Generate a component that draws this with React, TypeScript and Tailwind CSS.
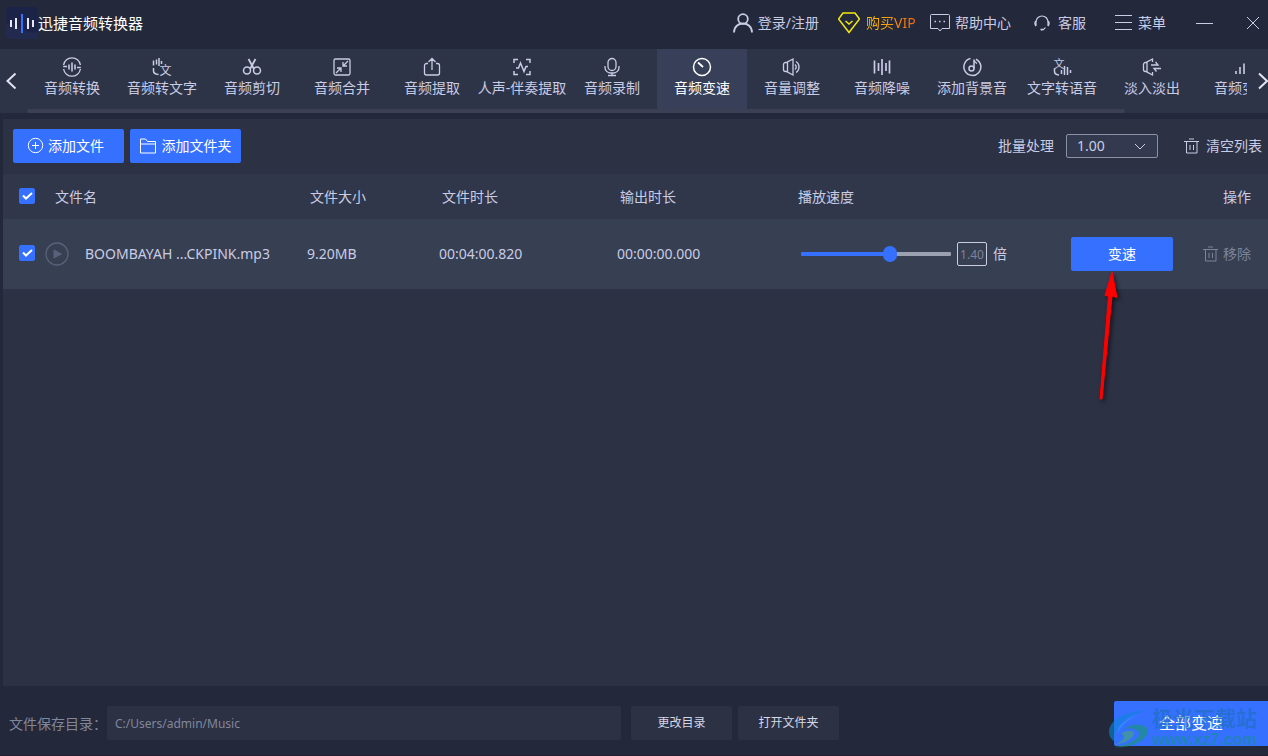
import React, { useState } from 'react';
import clsx from 'clsx';

interface IconProps {
  className?: string;
  size?: number;
  children?: React.ReactNode;
}

const Icon: React.FC<IconProps> = ({ className, size = 20, children }) => (
  <svg
    width={size}
    height={size}
    viewBox={`0 0 ${size} ${size}`}
    fill="none"
    stroke="currentColor"
    strokeWidth="1.3"
    aria-hidden="true"
    className={clsx('shrink-0', className)}
  >
    {children}
  </svg>
);

const tabs = [
  {
    label: '音频转换',
    icon: (
      <>
        <path d="M1.6 8a8.5 8.5 0 0 1 16.8 0M18.4 12a8.5 8.5 0 0 1-16.8 0M1.2 9.5H5M15 10.500H18.800" />
        <path d="M7 7.500v5M10 5.500v9M13 7.500v5" strokeWidth="1.600" />
      </>
    ),
  },
  {
    label: '音频转文字',
    icon: (
      <>
        <path d="M1.5 3.5v5M4.500 2.500v5M7 1v8M9.500 4v3M1.5 11v3q0 3 5 3.5" strokeWidth="1.500" />
        <text x="7.5" y="18" fontSize="12" fill="currentColor" stroke="none">文</text>
      </>
    ),
  },
  {
    label: '音频剪切',
    icon: (
      <>
        <path d="M6.5 2l5.5 10M13.5 2L8 12" strokeWidth="1.8" />
        <circle cx="5" cy="13.500" r="3.500" strokeWidth="1.500" />
        <circle cx="15" cy="13.500" r="3.500" strokeWidth="1.500" />
      </>
    ),
  },
  {
    label: '音频合并',
    icon: (
      <>
        <rect x="2" y="2" width="16" height="16" rx="1.5" />
        <path d="M16 4l-5 5M11 5v4h4M4 16l5-5M5 11h4v4" />
      </>
    ),
  },
  {
    label: '音频提取',
    icon: <path d="M6 6.5H4.5A2 2 0 0 0 2.5 8.5V16a2 2 0 0 0 2 2h11a2 2 0 0 0 2-2V8.5a2 2 0 0 0-2-2H14M10 13V2M6.5 5L10 1.5 13.5 5" />,
  },
  {
    label: '人声-伴奏提取',
    icon: <path d="M2 6V2.5h4M14 2.5h4V6M18 14v3.5h-4M6 17.5H2V14M4 11h2.5l2-5 3.5 8.5 2-5H16" strokeWidth="1.5" />,
  },
  {
    label: '音频录制',
    icon: (
      <>
        <rect x="6" y="1.5" width="8" height="12" rx="4" />
        <path d="M3 9v1.5a5.5 5.5 0 0 0 5.500 5.500h3a5.500 5.500 0 0 0 5.500-5.500V9M10 16v2.500M6 18.500h8" />
      </>
    ),
  },
  {
    label: '音频变速',
    icon: (
      <>
        <circle cx="10" cy="10" r="8.5" strokeWidth="1.5" />
        <path d="M6 5.5l5 4.5" strokeWidth="1.8" />
      </>
    ),
  },
  {
    label: '音量调整',
    icon: (
      <>
        <path d="M5.5 5.5h-2a2 2 0 0 0-2 2v5a2 2 0 0 0 2 2h2M5.5 5v10l5.5 3V2z" />
        <path d="M13 7.5q2.5 2.5 0 5M14 4.5a6.5 6.5 0 0 1 0 11" />
      </>
    ),
  },
  {
    label: '音频降噪',
    icon: <path d="M2.5 3.5v13M6.5 6v8M10 2v16M14 6v8M17.5 3.5v13" strokeWidth="1.7" />,
  },
  {
    label: '添加背景音',
    icon: (
      <>
        <path d="M8.5 1.600a8.500 8.500 0 1 0 5.500 .6" strokeWidth="1.500" />
        <circle cx="9.500" cy="11.500" r="2.500" strokeWidth="1.500" />
        <path d="M12 11.500V2.500q.5 3 3 4" strokeWidth="1.500" />
      </>
    ),
  },
  {
    label: '文字转语音',
    icon: (
      <>
        <text x="1.5" y="10.5" fontSize="11" fill="currentColor" stroke="none">文</text>
        <path d="M2.5 11.500v3q0 3 4.500 3.500M9.500 13v4M12.500 9v9M15.500 10v8M18.500 13v3" strokeWidth="1.500" />
      </>
    ),
  },
  {
    label: '淡入淡出',
    icon: (
      <>
        <path d="M5 5.5H3.5a2 2 0 0 0-2 2v5a2 2 0 0 0 2 2H5M10.5 5V2L5 5v10l5.5 3v-3" />
        <path d="M9 8h7l-2.5-3M19 11.5h-7l2.500 3" />
      </>
    ),
  },
  {
    label: '音频变调',
    icon: <path d="M4 14v3M8 10v7M12 6.5V17M16 3v14" strokeWidth="1.6" />,
  },
];

const TrashIcon: React.FC = () => (
  <Icon size={16}>
    <path d="M0 3.5h15M5 1h5M2.5 4v11h10.5V4M6 7v5M9.5 7v5" strokeWidth="1" />
  </Icon>
);

const TitleBar: React.FC = () => (
  <header className="flex h-[49px] items-center pb-1 pl-[6px] pr-2 text-sm leading-5 text-[#c9cce4]">
    <svg width="32" height="32" viewBox="0 0 32 32" aria-hidden="true" className="shrink-0">
      <rect width="32" height="32" rx="5" fill="#1c2348" />
      <path d="M0 16Q9 17 16 22T32 25V28a4 4 0 0 1-4 4H4a4 4 0 0 1-4-4Z" fill="#222a50" />
      <path d="M5 13v7M10 11v11M22 11v11M27 13v7" stroke="#e6e9f5" strokeWidth="2" />
      <path d="M16 7v19" stroke="#3570ff" strokeWidth="2" />
    </svg>
    <h1 className="text-[15px] leading-5 text-white">迅捷音频转换器</h1>

    <nav className="ml-auto flex items-center whitespace-nowrap">
      <a href="#login" className="mr-[19px] flex items-center gap-[5px]">
        <Icon>
          <circle cx="10" cy="6" r="4.800" strokeWidth="1.800" />
          <path d="M1 19.500c0-12 18-12 18 0" strokeWidth="1.800" />
        </Icon>
        登录/注册
      </a>
      <a href="#vip" className="mr-[13px] flex items-center gap-[6px]">
        <Icon size={22} className="text-[#f5e90c]">
          <path d="M5 1h12l4.500 6L11 20.500.5 7z" strokeWidth="1.500" />
          <path d="M7.500 9l3.500 3 3.500-3" strokeWidth="1.500" />
        </Icon>
        <span className="w-[51px] bg-gradient-to-r from-[#ffc400] to-[#f06410] bg-clip-text text-transparent">购买VIP</span>
      </a>
      <a href="#help" className="mr-[23px] flex items-center gap-[5px]">
        <Icon>
          <path d="M1.500 1.500h17a1 1 0 0 1 1 1v13H12l-2 2.500-2-2.500H.5v-13a1 1 0 0 1 1-1z" strokeWidth="1" />
          <path d="M4.500 8.500h1.500M9 8.500h1.500M13.500 8.500H15" strokeWidth="1.500" />
        </Icon>
        帮助中心
      </a>
      <a href="#service" className="mr-[29px] flex items-center gap-2">
        <Icon size={16}>
          <path d="M2 10.500V7a6 6 0 0 1 12 0v3.500M11.500 12.500Q10 15 7 15" strokeWidth="1.200" />
          <path d="M2 6q-2 2 0 5M14 6q2 2 0 5M6.500 14.500h3" strokeWidth="1.500" />
        </Icon>
        客服
      </a>
      <button type="button" className="mr-[30px] flex items-center gap-[6px]">
        <Icon size={17}>
          <path d="M0 1.500h17M0 8.500h17M0 15.500h17" strokeWidth="1" />
        </Icon>
        菜单
      </button>
      <button type="button" aria-label="最小化" className="mr-[33px]">
        <Icon size={17}>
          <path d="M0 9.500h17" strokeWidth="1" />
        </Icon>
      </button>
      <button type="button" aria-label="关闭">
        <Icon size={14}>
          <path d="M1 1l12 12M13 1L1 13" strokeWidth="1" />
        </Icon>
      </button>
    </nav>
  </header>
);

interface TabBarProps {
  active: string;
  onSelect: (label: string) => void;
}

const TabBar: React.FC<TabBarProps> = ({ active, onSelect }) => (
  <div className="flex h-16 bg-[#2d3448]">
    <button type="button" aria-label="向左" className="flex w-[27px] shrink-0 items-center justify-center pr-[6px] text-[#e0e3f0]">
      <Icon>
        <path d="M14.5 2.5L6.5 10l8 7.5" strokeWidth="2" />
      </Icon>
    </button>
    <div className="min-w-0 flex-1 overflow-hidden">
      <div className="flex h-[60px]">
        {tabs.map((tab) => (
          <button
            key={tab.label}
            type="button"
            onClick={() => onSelect(tab.label)}
            className={clsx(
              'flex w-[90px] shrink-0 flex-col items-center gap-px pt-2 text-sm leading-5 whitespace-nowrap',
              tab.label === active ? 'bg-[#374058] text-white' : 'text-[#c9cce4]'
            )}
          >
            <Icon>{tab.icon}</Icon>
            {tab.label}
          </button>
        ))}
      </div>
      <div className="h-1 w-[90%] rounded-sm bg-[#3b4054]" />
    </div>
    <button type="button" aria-label="向右" className="flex w-[21px] shrink-0 items-center justify-end text-[#e0e3f0]">
      <Icon>
        <path d="M11 2.500L19 10l-8 7.500" strokeWidth="2" />
      </Icon>
    </button>
  </div>
);

interface CheckBoxProps {
  label: string;
  checked: boolean;
  onChange: (checked: boolean) => void;
}

const CheckBox: React.FC<CheckBoxProps> = ({ label, checked, onChange }) => (
  <span className="relative mb-[2px] block size-4">
    <input
      type="checkbox"
      aria-label={label}
      checked={checked}
      onChange={(e) => onChange(e.target.checked)}
      className="block size-4 appearance-none rounded-[2px] border border-[#8b91a5] checked:border-[#3570ff] checked:bg-[#3570ff]"
    />
    {checked && (
      <Icon size={16} className="pointer-events-none absolute inset-0 text-white">
        <path d="M4 7.500l3 3 6-5.500" strokeWidth="2" />
      </Icon>
    )}
  </span>
);

const FileTable: React.FC = () => {
  const [checked, setChecked] = useState(true);
  const [speed, setSpeed] = useState(1.4);
  const filled = ((speed - 0.5) / 1.5) * 100;

  return (
    <table className="w-full table-fixed text-left text-sm leading-5 text-[#c9cce4]">
      <colgroup>
        <col className="w-[42px]" />
        <col />
        <col className="w-[132px]" />
        <col className="w-[178px]" />
        <col className="w-[178px]" />
        <col className="w-[276px]" />
        <col className="w-[207px]" />
      </colgroup>
      <thead className="bg-[#31374a]">
        <tr className="h-[45px]">
          <th className="pl-4">
            <CheckBox label="全选" checked={checked} onChange={setChecked} />
          </th>
          <th className="pl-[10px] font-normal">文件名</th>
          <th className="pl-[13px] font-normal">文件大小</th>
          <th className="pl-[13px] font-normal">文件时长</th>
          <th className="pl-[13px] font-normal">输出时长</th>
          <th className="pl-[13px] font-normal">播放速度</th>
          <th className="pr-[17px] text-right font-normal">操作</th>
        </tr>
      </thead>
      <tbody className="bg-[#373f53]">
        <tr className="h-[70px]">
          <td className="pl-4">
            <CheckBox label="选择文件" checked={checked} onChange={setChecked} />
          </td>
          <td>
            <div className="flex items-center gap-4 whitespace-nowrap">
              <button type="button" aria-label="播放" className="text-[#59617a]">
                <Icon size={24}>
                  <circle cx="12" cy="12" r="11" />
                  <path d="M9 8l7.500 4L9 16z" fill="currentColor" strokeWidth="1" />
                </Icon>
              </button>
              BOOMBAYAH ...CKPINK.mp3
            </div>
          </td>
          <td className="pl-[10px]">9.20MB</td>
          <td className="pl-[10px]">00:04:00.820</td>
          <td className="pl-[10px]">00:00:00.000</td>
          <td className="pl-4">
            <div className="flex items-center gap-[6px]">
              <input
                type="range"
                aria-label="播放速度"
                min={0.5}
                max={2}
                step={0.1}
                value={speed}
                onChange={(e) => setSpeed(Number(e.target.value))}
                style={{ backgroundImage: `linear-gradient(to right, #3570ff ${filled}%, #9ba1b0 ${filled}%)` }}
                className="h-1 w-[150px] appearance-none rounded-[1px] [&::-webkit-slider-thumb]:h-4 [&::-webkit-slider-thumb]:w-[14px] [&::-webkit-slider-thumb]:appearance-none [&::-webkit-slider-thumb]:rounded-full [&::-webkit-slider-thumb]:bg-[#3570ff]"
              />
              <label className="flex items-center gap-[6px]">
                <input
                  type="text"
                  value={speed.toFixed(2)}
                  onChange={(e) => setSpeed(Number(e.target.value) || 1)}
                  className="h-6 w-[30px] rounded-[2px] border border-[#c9cce4] text-center text-xs text-[#7d8498]"
                />
                倍
              </label>
            </div>
          </td>
          <td className="pl-[10px] pr-[17px]">
            <div className="flex items-center justify-between">
              <div className="relative">
                <button type="button" className="h-[34px] w-[102px] rounded-[2px] bg-[#3570ff] text-white">
                  变速
                </button>
                <svg
                  width="30"
                  height="132"
                  viewBox="0 0 30 132"
                  aria-hidden="true"
                  className="pointer-events-none absolute left-6 top-full drop-shadow-[2px_2px_2px_rgba(0,0,0,0.6)]"
                >
                  <path d="M17 1L22 26.500 17 25 7 128H5L13.500 25 10 24.500z" fill="#ff0000" stroke="#ff0000" strokeWidth="1" />
                </svg>
              </div>
              <button type="button" className="flex items-center gap-1 text-[#7d8498]">
                <TrashIcon />
                移除
              </button>
            </div>
          </td>
        </tr>
      </tbody>
    </table>
  );
};

const Watermark: React.FC = () => (
  <div className="pointer-events-none absolute -left-2 top-[6px] flex items-center opacity-60">
    <svg width="46" height="40" viewBox="0 0 46 40" aria-hidden="true">
      <path d="M42 2C24 1 4 9 3 22c0 5 2 9 7 11-2-5-2-9 2-15C18 9 30 3 42 2z" fill="#0b86d8" />
      <path d="M32 6C20 9 10 18 12 24c2-6 9-13 20-18z" fill="#2a9df0" />
      <path d="M17 21c7-7 23-7 25 0 1 9-16 19-34 17 15-2 26-9 25-14-1-4-9-6-16-3z" fill="#18986a" />
      <path d="M15 25c5-4 12-4 13-1 1 4-8 10-19 12 8-4 13-9 6-11z" fill="#4aa970" />
    </svg>
    <div className="whitespace-nowrap leading-[22px]">
      <div className="text-[21px] font-bold text-[#1d70b8]">极光下载站</div>
      <div className="font-['Liberation_Sans',sans-serif] text-base leading-[22px] font-bold text-[#14918a]">www.xz7.com</div>
    </div>
  </div>
);

const Footer: React.FC = () => (
  <footer className="flex h-[70px] items-center border-b border-[#211f30] pl-[9px] pt-[5px] text-xs leading-5">
    <label htmlFor="save-dir" className="w-[98px] shrink-0 whitespace-nowrap pt-[2px] text-sm leading-5 text-[#81879b]">
      文件保存目录：
    </label>
    <input
      id="save-dir"
      type="text"
      readOnly
      value="C:/Users/admin/Music"
      className="h-[34px] min-w-0 max-w-[514px] flex-1 rounded-[2px] bg-[#2c3144] px-2 text-[#81879b]"
    />
    <button type="button" className="ml-[10px] h-[34px] w-[101px] rounded-[2px] bg-[#2c3144] text-[#d4d7e6]">
      更改目录
    </button>
    <button type="button" className="ml-[6px] h-[34px] w-[101px] rounded-[2px] bg-[#2c3144] text-[#d4d7e6]">
      打开文件夹
    </button>
    <div className="relative ml-auto">
      <button type="button" className="h-[45px] w-[154px] rounded-l-[2px] bg-[#3570ff] text-base text-white">
        全部变速
      </button>
      <Watermark />
    </div>
  </footer>
);

export default function App() {
  const [active, setActive] = useState('音频变速');

  return (
    <div className="flex min-h-screen flex-col bg-[#24283b] font-['Noto_Sans','Noto_Sans_CJK_SC',sans-serif]">
      <TitleBar />
      <TabBar active={active} onSelect={setActive} />

      <main className="mt-[6px] ml-[3px] flex-1 bg-[#2c3144]">
        <div className="flex h-[55px] items-center pb-[2px] pl-[10px] pr-[6px] text-sm leading-5 text-[#c9cce4]">
          <button type="button" className="flex h-[34px] w-[111px] items-center justify-center gap-1 rounded-[2px] bg-[#3570ff] pr-[6px] text-white">
            <Icon size={17}>
              <circle cx="8.500" cy="8.500" r="7.200" strokeWidth="1" />
              <path d="M8.500 5v7M5 8.500h7" strokeWidth="1" />
            </Icon>
            添加文件
          </button>
          <button type="button" className="ml-[6px] flex h-[34px] w-[111px] items-center justify-center gap-[6px] rounded-[2px] bg-[#3570ff] text-white">
            <Icon size={16}>
              <path d="M.5 15V1h5l2 2.500h8V15zM.5 6h15" strokeWidth="1" />
            </Icon>
            添加文件夹
          </button>

          <label htmlFor="batch" className="ml-auto">批量处理</label>
          <div className="relative ml-3">
            <select
              id="batch"
              defaultValue="1.00"
              className="block h-6 w-[92px] appearance-none rounded-[2px] border border-[#8b91a5] bg-[#333a50] pl-[10px] leading-5"
            >
              <option>0.50</option>
              <option>1.00</option>
              <option>1.50</option>
              <option>2.00</option>
            </select>
            <Icon size={12} className="pointer-events-none absolute right-3 top-[6px]">
              <path d="M1 4l5 5 5-5" strokeWidth="1" />
            </Icon>
          </div>
          <button type="button" className="ml-[26px] flex items-center gap-[6px]">
            <TrashIcon />
            清空列表
          </button>
        </div>
        <FileTable />
      </main>

      <Footer />
    </div>
  );
}
